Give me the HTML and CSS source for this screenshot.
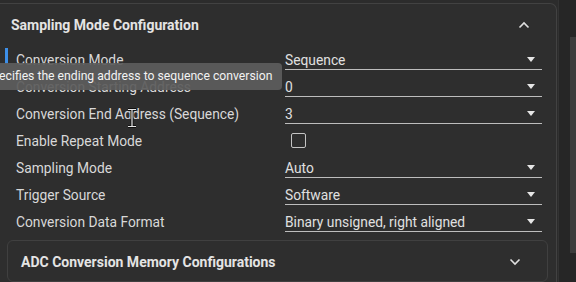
FILE: index.html
```html
<!DOCTYPE html>
<html lang="en">
<head>
    <meta charset="UTF-8">
    <meta name="viewport" content="width=device-width, initial-scale=1.0">
    <title>ADC Configuration</title>
    <link rel="stylesheet" href="styles.css">
</head>
<body>
    <div class="layout">
        <div class="main">
            <section class="panel">
                <div class="panel-head">
                    <span class="panel-title">Sampling Mode Configuration</span>
                    <svg class="chevron" width="12" height="8" viewBox="0 0 12 8"><path d="M1.5 6.5 L6 2 L10.5 6.5" fill="none" stroke="#e0e0e0" stroke-width="1.6"/></svg>
                </div>

                <div class="fields">
                    <div class="row active">
                        <span class="label">Conversion Mode</span>
                        <div class="select"><span>Sequence</span><i class="caret"></i></div>
                    </div>
                    <div class="row">
                        <span class="label">Conversion Starting Address</span>
                        <div class="select"><span>0</span><i class="caret"></i></div>
                    </div>
                    <div class="row">
                        <span class="label">Conversion End Address (Sequence)</span>
                        <div class="select"><span>3</span><i class="caret"></i></div>
                        <svg class="ibeam" width="10" height="20" viewBox="0 0 10 20"><path d="M1 1.5 H9 M1 18.5 H9 M5 1.5 V18.5" fill="none" stroke="#111" stroke-width="3"/><path d="M1 1.5 H9 M1 18.5 H9 M5 1.5 V18.5" fill="none" stroke="#e8e8e8" stroke-width="1.2"/></svg>
                    </div>
                    <div class="row">
                        <span class="label">Enable Repeat Mode</span>
                        <div class="check-cell"><span class="checkbox"></span></div>
                    </div>
                    <div class="row">
                        <span class="label">Sampling Mode</span>
                        <div class="select"><span>Auto</span><i class="caret"></i></div>
                    </div>
                    <div class="row">
                        <span class="label">Trigger Source</span>
                        <div class="select"><span>Software</span><i class="caret"></i></div>
                    </div>
                    <div class="row">
                        <span class="label">Conversion Data Format</span>
                        <div class="select"><span>Binary unsigned, right aligned</span><i class="caret"></i></div>
                    </div>

                    <div class="tooltip">Specifies the ending address to sequence conversion</div>
                </div>

                <div class="card">
                    <span class="card-title">ADC Conversion Memory Configurations</span>
                    <svg class="chevron" width="12" height="8" viewBox="0 0 12 8"><path d="M1.5 1.5 L6 6 L10.5 1.5" fill="none" stroke="#e0e0e0" stroke-width="1.6"/></svg>
                </div>
            </section>
        </div>

        <div class="scroll">
            <div class="thumb"></div>
        </div>
    </div>
</body>
</html>
```

FILE: styles.css
```css
* {
    margin: 0;
    padding: 0;
    box-sizing: border-box;
}

body {
    font-family: Roboto, "Liberation Sans", sans-serif;
    background: #2c2c2c;
    color: #dadada;
    width: 576px;
    height: 282px;
    overflow: hidden;
}

.layout {
    display: flex;
    height: 282px;
}

.main {
    width: 558px;
    padding-top: 3px;
}

.panel {
    width: 557px;
    height: 290px;
    border: 1px solid #424242;
    border-left: none;
    border-radius: 0 7px 0 0;
    background: #2e2e2e;
}

.panel-head {
    height: 42px;
    display: flex;
    align-items: center;
    justify-content: space-between;
    padding: 0 26px 0 11px;
}

.panel-title {
    font-size: 14px;
    font-weight: 700;
    color: #e4e4e4;
}

.fields {
    position: relative;
}

.row {
    position: relative;
    height: 27px;
    display: flex;
    align-items: flex-start;
    padding-left: 16px;
}

.row.active::before {
    content: "";
    position: absolute;
    left: 5px;
    top: 2px;
    width: 3px;
    height: 16px;
    background: #3d8fe8;
}

.label {
    width: 269px;
    height: 24px;
    line-height: 28px;
    font-size: 13.8px;
    color: #d8d8d8;
}

.select {
    width: 257px;
    height: 24px;
    display: flex;
    align-items: center;
    justify-content: space-between;
    padding: 4px 7px 0 0;
    border-bottom: 1px solid #bdbdbd;
    font-size: 13.8px;
    color: #e0e0e0;
}

.caret {
    width: 0;
    height: 0;
    border-left: 4px solid transparent;
    border-right: 4px solid transparent;
    border-top: 5px solid #e6e6e6;
}

.check-cell {
    height: 24px;
    display: flex;
    align-items: center;
    padding: 2px 0 0 6px;
}

.checkbox {
    width: 15px;
    height: 15px;
    border: 1.5px solid #c4c4c4;
    border-radius: 2px;
}

.ibeam {
    position: absolute;
    left: 127px;
    top: 8px;
}

.tooltip {
    position: absolute;
    left: -24px;
    top: 17px;
    height: 27px;
    line-height: 27px;
    padding: 0 10px 0 9px;
    border-radius: 4px;
    background: rgba(92, 92, 92, 0.93);
    color: #f2f2f2;
    font-size: 12.2px;
    white-space: nowrap;
}

.card {
    margin: 5px 8px 0 7px;
    height: 42px;
    display: flex;
    align-items: center;
    justify-content: space-between;
    padding: 2px 26px 0 13px;
    border: 1px solid #404040;
    border-radius: 6px;
    background: #2e2e2e;
}

.card-title {
    font-size: 14px;
    font-weight: 700;
    color: #e4e4e4;
}

.scroll {
    flex: 1;
    position: relative;
    background: #262626;
    border-left: 1px solid #333;
}

.thumb {
    position: absolute;
    right: 0;
    top: 37px;
    width: 6px;
    height: 216px;
    background: #3c3c3c;
}
```
